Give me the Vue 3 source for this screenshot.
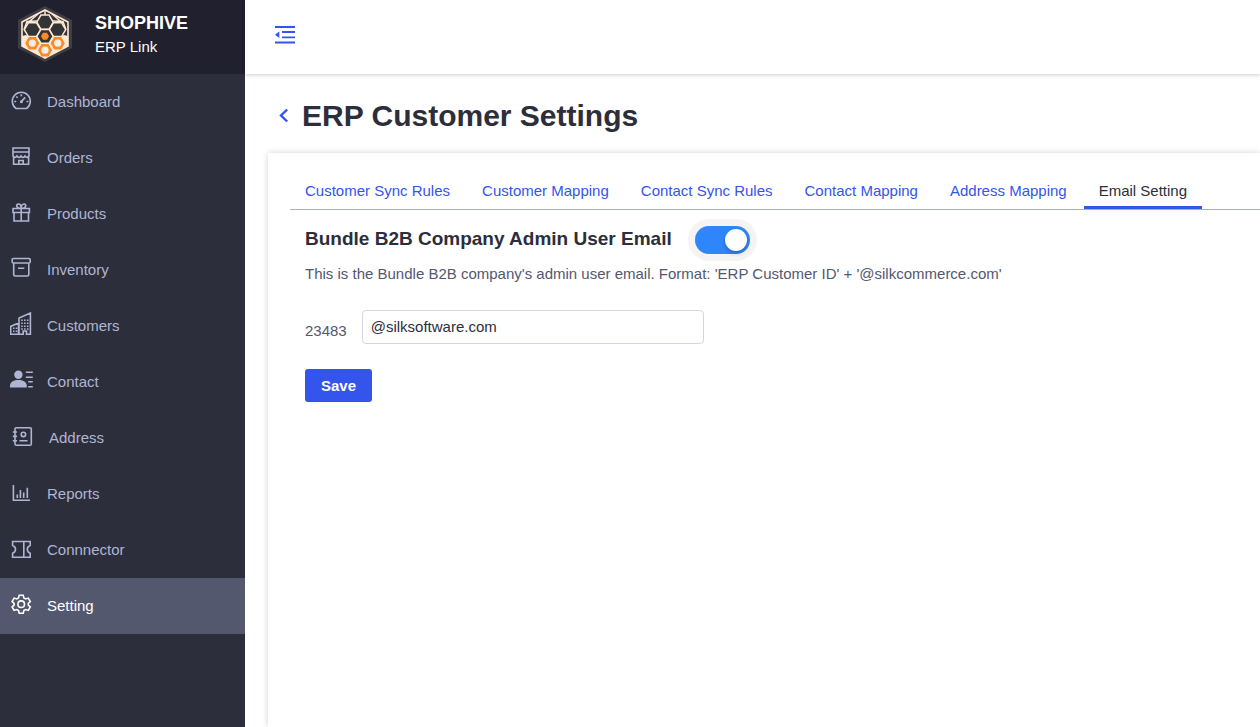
<script setup>
import { ref } from 'vue'

const menu = [
  {
    name: 'Dashboard',
    line: 'M6 20.5 A9 9 0 1 1 16.6 20.5 Z M11.3 13.6 L15.2 9.4 M11.3 6.2 V8.2 M6.3 8.5 L7.6 9.8 M4.2 13.5 H6.2 M16.4 13.5 H18.4',
    solid: 'M9.9 13.8 A1.5 1.5 0 1 1 12.9 13.8 A1.5 1.5 0 1 1 9.9 13.8 Z'
  },
  {
    name: 'Orders',
    line: 'M3 4 H19 V8 H3 Z M3 8 V11.5 M19 8 V11.5 M2.6 11.5 Q5 15 7 12 Q9 15 11 12 Q13 15 15 12 Q17 15 19.4 11.5 M3.6 13 V20.3 H18.6 V13 M8.8 20 V16.5 H13.2 V20'
  },
  {
    name: 'Products',
    line: 'M3 8.5 H19.4 V12.5 H3 Z M4 12.5 V21 H18.5 V12.5 M11.2 8.5 V21 M11.2 8.5 C6 8.5 5.5 4 8.5 4 C10.5 4 11.2 6 11.2 8.5 C11.2 6 12 4 14 4 C17 4 16.4 8.5 11.2 8.5'
  },
  {
    name: 'Inventory',
    line: 'M3.3 2.5 H19 Q20.2 2.5 20.2 3.5 V6 Q20.2 7 19 7 H3.3 Q2.2 7 2.2 6 V3.5 Q2.2 2.5 3.3 2.5 Z M3.7 7 V18.5 Q3.7 20 5.2 20 H17.3 Q18.8 20 18.8 18.5 V7 M8 12.3 H14.3'
  },
  {
    name: 'Customers',
    line: 'M0.7 22.2 V14.4 L8.5 11 V22.2 Z M9 22.2 V6 L20.4 1 V22.2 H16.5 V19 H13.2 V22.2 H9',
    solid: 'M3 15.5 h1.5 v1.5 h-1.5 Z M5.7 15.5 h1.5 v1.5 h-1.5 Z M3 18.5 h1.5 v1.5 h-1.5 Z M5.7 18.5 h1.5 v1.5 h-1.5 Z M11.2 7.5 h1.6 v1.6 h-1.6 Z M14 7.5 h1.6 v1.6 h-1.6 Z M16.9 7.5 h1.6 v1.6 h-1.6 Z M11.2 10.5 h1.6 v1.6 h-1.6 Z M14 10.5 h1.6 v1.6 h-1.6 Z M16.9 10.5 h1.6 v1.6 h-1.6 Z M11.2 13.5 h1.6 v1.6 h-1.6 Z M14 13.5 h1.6 v1.6 h-1.6 Z M16.9 13.5 h1.6 v1.6 h-1.6 Z M11.2 16.2 h1.6 v1.6 h-1.6 Z M14 16.2 h1.6 v1.6 h-1.6 Z M16.9 16.2 h1.6 v1.6 h-1.6 Z'
  },
  {
    name: 'Contact',
    line: 'M15.8 4.2 H22.8 M15.8 9.2 H22.8 M18.2 13.7 H22.8 M18.2 18.7 H22.8',
    solid: 'M4.2 6.8 A4.2 4.2 0 1 1 12.6 6.8 A4.2 4.2 0 1 1 4.2 6.8 Z M0 19.6 V17.5 C0.5 13.5 4 12 8.4 12 C12.8 12 16.3 13.5 16.8 17.5 V19.6 Z'
  },
  {
    name: 'Address',
    wide: true,
    line: 'M6.2 3.8 H20 Q21.3 3.8 21.3 5 V20 Q21.3 21.3 20 21.3 H6.2 Q5 21.3 5 20 V5 Q5 3.8 6.2 3.8 Z M2.8 8 H7 M2.8 12.4 H7 M2.8 16.8 H7 M11.2 10.4 A2.2 2.2 0 1 1 15.6 10.4 A2.2 2.2 0 1 1 11.2 10.4 Z M9.5 16.8 H17.5'
  },
  {
    name: 'Reports',
    line: 'M3.4 5 V20.3 H20 M7.3 14.5 V18 M10.4 10 V18 M13.7 12.5 V18 M17.3 7.8 V18'
  },
  {
    name: 'Connnector',
    line: 'M2.6 5.5 H20.2 V9.5 Q17.3 10.5 17.3 13.3 Q17.3 16.2 20.2 17.2 V21.2 H2.6 V17.2 Q5.5 16.2 5.5 13.3 Q5.5 10.5 2.6 9.5 Z M13.8 5.5 V21'
  },
  {
    name: 'Setting',
    active: true,
    line: 'M9.2 3.2 H13.2 L13.9 5.9 L15.6 6.9 L18.3 6.1 L20.3 9.6 L18.3 11.4 V13.1 L20.3 14.9 L18.3 18.4 L15.6 17.6 L13.9 18.6 L13.2 21.3 H9.2 L8.5 18.6 L6.8 17.6 L4.1 18.4 L2.1 14.9 L4.1 13.1 V11.4 L2.1 9.6 L4.1 6.1 L6.8 6.9 L8.5 5.9 Z M7.9 12.2 A3.3 3.3 0 1 1 14.5 12.2 A3.3 3.3 0 1 1 7.9 12.2 Z'
  }
]

const tabs = [
  'Customer Sync Rules',
  'Customer Mapping',
  'Contact Sync Rules',
  'Contact Mapping',
  'Address Mapping',
  'Email Setting'
]

const activeTab = ref('Email Setting')
const enabled = ref(true)
const domain = ref('@silksoftware.com')
</script>

<template>
  <div class="layout">
    <aside class="sidebar">
      <div class="brand">
        <svg class="logo" viewBox="0 0 54 56" aria-hidden="true">
          <polygon points="27,0 54,14 54,42 27,56 0,42 0,14" fill="#3e3e42" />
          <polygon points="27,4 50,16 50,40 27,52 4,40 4,16" fill="#333436" stroke="#ffe8d4" stroke-width="1.6" />
          <polygon points="4,30 8,29 14,32 20,31 24,37 30,37 34,31 40,32 46,29 50,30 50,40 27,52 4,40" fill="#ffe8d4" />
          <g fill="#333436" stroke="#ffe8d4" stroke-width="1.5">
            <path d="M27 4 V9 M19 15 L9 15.500 L6 23.700 M35 15 L45 15.500 L48 23.700 M20 8 L9.500 17 M34 8 L44.500 17" />
            <polygon points="35.2,16.2 31.1,23.3 22.9,23.3 18.8,16.2 22.9,9.1 31.1,9.1" />
            <polygon points="22.7,23.7 18.6,30.6 10.4,30.6 6.3,23.7 10.4,16.8 18.6,16.8" />
            <polygon points="47.7,23.7 43.6,30.6 35.4,30.6 31.3,23.7 35.4,16.8 43.6,16.8" />
            <polygon points="35.2,30.3 31.1,37.2 22.9,37.2 18.8,30.3 22.9,23.4 31.1,23.4" />
          </g>
          <g fill="#fb8a27">
            <polygon points="31,30.3 29,33.8 25,33.8 23,30.3 25,26.8 29,26.8" />
            <polygon points="21.4,37.2 17.8,43.5 10.8,43.5 7.2,37.2 10.8,30.9 17.8,30.9" />
            <polygon points="46.8,37.2 43.2,43.5 36.2,43.5 32.6,37.2 36.2,30.9 43.2,30.9" />
            <polygon points="34.1,44.2 30.5,50.5 23.5,50.5 19.9,44.2 23.5,37.9 30.5,37.9" />
          </g>
          <g fill="#f3efe4">
            <circle cx="14.3" cy="37.2" r="3.6" />
            <circle cx="39.7" cy="37.2" r="3.6" />
            <circle cx="27" cy="44.2" r="3.6" />
          </g>
        </svg>
        <div class="brand-text">
          <strong class="brand-name">SHOPHIVE</strong>
          <span class="brand-sub">ERP Link</span>
        </div>
      </div>
      <nav>
        <a v-for="item in menu" :key="item.name" href="#" class="menu-item" :class="{ active: item.active }">
          <svg class="menu-icon" :class="{ wide: item.wide }" viewBox="0 0 24 24" aria-hidden="true">
            <path class="line" :d="item.line" />
            <path v-if="item.solid" class="solid" :d="item.solid" />
          </svg>
          <span class="menu-label">{{ item.name }}</span>
        </a>
      </nav>
    </aside>

    <div class="main">
      <header class="topbar">
        <button type="button" class="icon-button" aria-label="Collapse menu">
          <svg width="20" height="18" viewBox="0 0 20 18">
            <path d="M0 1 H20 M7 6 H20 M7 11.3 H20 M0 16.5 H20" fill="none" stroke="#3455eb" stroke-width="1.8" />
            <path d="M4.3 5.5 V12 L0 8.700 Z" fill="#3455eb" />
          </svg>
        </button>
      </header>

      <div class="title-row">
        <a href="#" class="back" aria-label="Back">
          <svg width="10" height="16" viewBox="0 0 10 16">
            <path d="M8.2 1.500 L2 7.500 L8.2 13.5" fill="none" stroke="#3455eb" stroke-width="2.4" />
          </svg>
        </a>
        <h1>ERP Customer Settings</h1>
      </div>

      <section class="card">
        <nav class="tabs">
          <a
            v-for="tab in tabs"
            :key="tab"
            href="#"
            class="tab"
            :class="{ active: tab === activeTab }"
            @click.prevent="activeTab = tab"
          >{{ tab }}</a>
        </nav>
        <form class="panel" @submit.prevent>
          <div class="heading-row">
            <label for="admin-email" class="heading">Bundle B2B Company Admin User Email</label>
            <input id="admin-email" v-model="enabled" type="checkbox" class="switch" />
          </div>
          <p class="hint">This is the Bundle B2B company's admin user email. Format: 'ERP Customer ID' + '@silkcommerce.com'</p>
          <div class="field">
            <label for="domain">23483</label>
            <input id="domain" v-model="domain" type="text" />
          </div>
          <button type="submit" class="save">Save</button>
        </form>
      </section>
    </div>
  </div>
</template>

<style>
body {
  background: #fff;
}
</style>

<style scoped>
.layout {
  display: flex;
  min-height: 100vh;
  overflow: hidden;
  font-family: 'Liberation Sans', Arial, sans-serif;
  font-size: 15px;
  color: #2c2e3b;
}

.layout * {
  box-sizing: border-box;
}

.sidebar {
  flex: 0 0 245px;
  background: #2c2e3b;
}

.brand {
  display: flex;
  align-items: flex-start;
  height: 74px;
  padding: 6px 18px;
  gap: 23px;
  background: #21202e;
  color: #fff;
}

.logo {
  width: 54px;
  height: 56px;
}

.brand-text {
  display: flex;
  flex-direction: column;
  padding-top: 5px;
  line-height: 24px;
}

.brand-name {
  font-size: 18px;
}

.menu-item {
  display: flex;
  align-items: center;
  height: 56px;
  padding-left: 10px;
  color: #b0b5d3;
  text-decoration: none;
}

.menu-item.active {
  background: #53586f;
  color: #fff;
}

.menu-icon {
  width: 24px;
  height: 24px;
  margin: 0 13px 4px 0;
}

.menu-icon.wide {
  margin-right: 15px;
}

.menu-label {
  padding-bottom: 1px;
}

.line {
  fill: none;
  stroke: currentColor;
  stroke-width: 1.6;
}

.solid {
  fill: currentColor;
}

.main {
  display: flex;
  flex: 1;
  flex-direction: column;
  min-width: 0;
}

.topbar {
  display: flex;
  align-items: center;
  height: 74px;
  padding: 0 30px 4px;
  box-shadow: 0 1px 4px rgb(0 0 0 / 0.2);
}

.icon-button {
  display: flex;
  padding: 0;
  border: none;
  background: none;
}

.title-row {
  display: flex;
  align-items: center;
  gap: 13px;
  height: 79px;
  padding: 4px 34px 0;
}

.back {
  display: flex;
}

h1 {
  margin: 0;
  font-size: 30px;
  line-height: 36px;
}

.card {
  flex: 1;
  margin-left: 23px;
  padding: 19px 0 24px 22px;
  box-shadow: 0 0 6px rgb(0 0 0 / 0.18);
}

.tabs {
  display: flex;
  gap: 2px;
  border-bottom: 1px solid #a9afcf;
}

.tab {
  padding: 9px 15px;
  line-height: 19px;
  color: #3455eb;
  text-decoration: none;
  white-space: nowrap;
}

.tab.active {
  padding-bottom: 6px;
  border-bottom: 3px solid #3455eb;
  color: #2c2e3b;
}

.panel {
  padding: 16px 15px;
}

.heading-row {
  display: flex;
  align-items: center;
  gap: 23px;
}

.heading {
  padding-bottom: 2px;
  font-size: 19px;
  font-weight: 700;
  line-height: 24px;
}

.switch {
  width: 55px;
  height: 28px;
  margin: 0;
  padding: 3px;
  appearance: none;
  background: #c8cbd8;
  border-radius: 14px;
  box-shadow: 0 0 0 7px #f4f4f4;
}

.switch::before {
  content: '';
  display: block;
  width: 22px;
  height: 22px;
  border-radius: 50%;
  background: #fff;
  box-shadow: 0 2px 4px rgb(0 0 0 / 0.25);
}

.switch:checked {
  background: #2f86fb;
}

.switch:checked::before {
  margin-left: 27px;
}

.hint {
  margin: 10px 0 26px;
  line-height: 20px;
  color: #53586f;
}

.field {
  display: flex;
  align-items: center;
  gap: 15px;
  color: #53586f;
}

.field label {
  padding-top: 6px;
}

.field input {
  width: 342px;
  height: 34px;
  padding: 0 8px 2px;
  border: 1px solid #d3d6e6;
  border-radius: 4px;
  font: inherit;
  color: #2c2e3b;
}

.save {
  height: 33px;
  margin-top: 25px;
  padding: 0 16px;
  border: none;
  border-radius: 3px;
  background: #3455eb;
  color: #fff;
  font: inherit;
  font-weight: 700;
}
</style>
